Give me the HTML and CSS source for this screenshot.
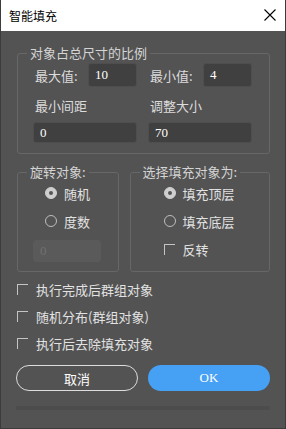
FILE: index.html
```html
<!DOCTYPE html>
<html lang="zh">
<head>
<meta charset="utf-8">
<title>智能填充</title>
<link rel="stylesheet" href="styles.css">
</head>
<body>
<div class="window">
  <div class="titlebar">
    <span class="title">智能填充</span>
    <svg class="close" width="12" height="12" viewBox="0 0 12 12"><path d="M0.5 0.5L11.5 11.5M11.5 0.5L0.5 11.5" stroke="#000" stroke-width="1.1" fill="none"/></svg>
  </div>
  <div class="content">
    <fieldset class="group">
      <legend>对象占总尺寸的比例</legend>
      <div class="size-grid">
        <div class="cell">
          <span class="lbl">最大值:</span>
          <div class="input small">10</div>
        </div>
        <div class="cell">
          <span class="lbl">最小值:</span>
          <div class="input small">4</div>
        </div>
        <div class="lbl row-label">最小间距</div>
        <div class="lbl row-label">调整大小</div>
        <div class="input wide">0</div>
        <div class="input wide">70</div>
      </div>
    </fieldset>

    <div class="pair">
      <fieldset class="group rotate-group">
        <legend>旋转对象:</legend>
        <div class="opts rotate-opts">
          <div class="opt"><span class="radio on"></span><span>随机</span></div>
          <div class="opt"><span class="radio"></span><span>度数</span></div>
        </div>
        <div class="input disabled">0</div>
      </fieldset>
      <fieldset class="group fill-group">
        <legend>选择填充对象为:</legend>
        <div class="opts fill-opts">
          <div class="opt"><span class="radio on"></span><span>填充顶层</span></div>
          <div class="opt"><span class="radio"></span><span>填充底层</span></div>
          <div class="opt"><span class="check"></span><span>反转</span></div>
        </div>
      </fieldset>
    </div>

    <div class="checks">
      <div class="opt"><span class="check"></span><span>执行完成后群组对象</span></div>
      <div class="opt"><span class="check"></span><span>随机分布(群组对象)</span></div>
      <div class="opt"><span class="check"></span><span>执行后去除填充对象</span></div>
    </div>

    <div class="buttons">
      <button class="btn cancel">取消</button>
      <button class="btn ok">OK</button>
    </div>

    <div class="progress"></div>
  </div>
</div>
</body>
</html>
```

FILE: styles.css
```css
* { box-sizing: border-box; }
html, body {
  margin: 0;
  padding: 0;
  background: #535353;
}
body {
  font-family: "Noto Sans CJK SC", "Noto Sans", sans-serif;
  font-size: 13px;
  color: #dcdcdc;
}
.window {
  width: 286px;
  height: 429px;
  background: #535353;
  border: 1px solid #3c3c3c;
  border-top: none;
  overflow: hidden;
}
.titlebar {
  height: 31px;
  background: #ffffff;
  display: flex;
  align-items: center;
  justify-content: space-between;
  padding: 0 9px 0 8px;
}
.title {
  color: #000;
  font-size: 12px;
  line-height: 16px;
}
.close {
  display: block;
  margin-top: -1px;
}
.content {
  padding: 14px 15px 0 15px;
}
.group {
  margin: 0 0 0 1px;
  padding: 0;
  border: 1px solid #676767;
  border-radius: 3px;
  min-width: 0;
}
.group legend {
  margin-left: 9px;
  padding: 0 3px;
  line-height: 16px;
  font-size: 13px;
  color: #d4d4d4;
  white-space: nowrap;
}
.size-grid {
  display: grid;
  grid-template-columns: 104px 104px;
  column-gap: 11px;
  padding: 2px 0 10px 15px;
}
.cell {
  display: flex;
  align-items: center;
  height: 24px;
}
.cell .lbl {
  width: 55px;
  padding-left: 2px;
}
.row-label {
  padding-left: 2px;
  line-height: 16px;
  margin: 11px 0 8px;
}
.input {
  background: #404040;
  border: 1px solid #4e4e4e;
  border-radius: 3px;
  color: #ffffff;
  font-family: "Liberation Serif", "DejaVu Serif", serif;
  font-size: 13px;
  display: flex;
  align-items: center;
  padding-left: 6px;
}
.input.small {
  width: 49px;
  height: 24px;
}
.input.wide {
  width: 104px;
  height: 21px;
}
.pair {
  display: flex;
  gap: 10px;
  margin-top: 10px;
}
.rotate-group {
  width: 102px;
  padding-bottom: 9px;
}
.fill-group {
  width: 141px;
  padding-bottom: 12px;
}
.rotate-opts {
  padding: 3px 0 0 27px;
}
.fill-opts {
  padding: 3px 0 0 33px;
}
.opt {
  display: flex;
  align-items: center;
  height: 20px;
  margin-bottom: 8px;
  color: #e2e2e2;
  white-space: nowrap;
}
.opt:last-child { margin-bottom: 0; }
.radio {
  width: 12px;
  height: 12px;
  border-radius: 50%;
  border: 1px solid #bdbdbd;
  margin-right: 7px;
  flex: none;
  position: relative;
}
.radio.on {
  background: #cfcfcf;
  border-color: #cfcfcf;
}
.radio.on::after {
  content: "";
  position: absolute;
  left: 3px;
  top: 3px;
  width: 4px;
  height: 4px;
  border-radius: 50%;
  background: #555555;
}
.check {
  width: 11px;
  height: 11px;
  border-top: 1px solid #c4c4c4;
  border-left: 1px solid #c4c4c4;
  margin-right: 8px;
  flex: none;
}
.input.disabled {
  width: 68px;
  height: 22px;
  margin: 9px 0 0 15px;
  background: #5a5a5a;
  border-color: #5a5a5a;
  color: #707070;
}
.checks {
  margin-top: 7px;
  padding-left: 1px;
}
.checks .opt {
  margin-bottom: 7px;
}
.checks .opt:last-child { margin-bottom: 0; }
.buttons {
  display: flex;
  gap: 10px;
  margin-top: 12px;
}
.btn {
  width: 122px;
  height: 26px;
  border-radius: 13px;
  font-family: "Noto Sans CJK SC", "Noto Sans", sans-serif;
  font-size: 13px;
  color: #ffffff;
  padding: 0;
}
.cancel {
  background: transparent;
  border: 1px solid #dddddd;
}
.ok {
  background: #46a0f4;
  border: none;
  font-family: "Liberation Serif", serif;
}
.progress {
  margin-top: 15px;
  height: 4px;
  border-radius: 2px;
  background: #4c4c4c;
}
```
